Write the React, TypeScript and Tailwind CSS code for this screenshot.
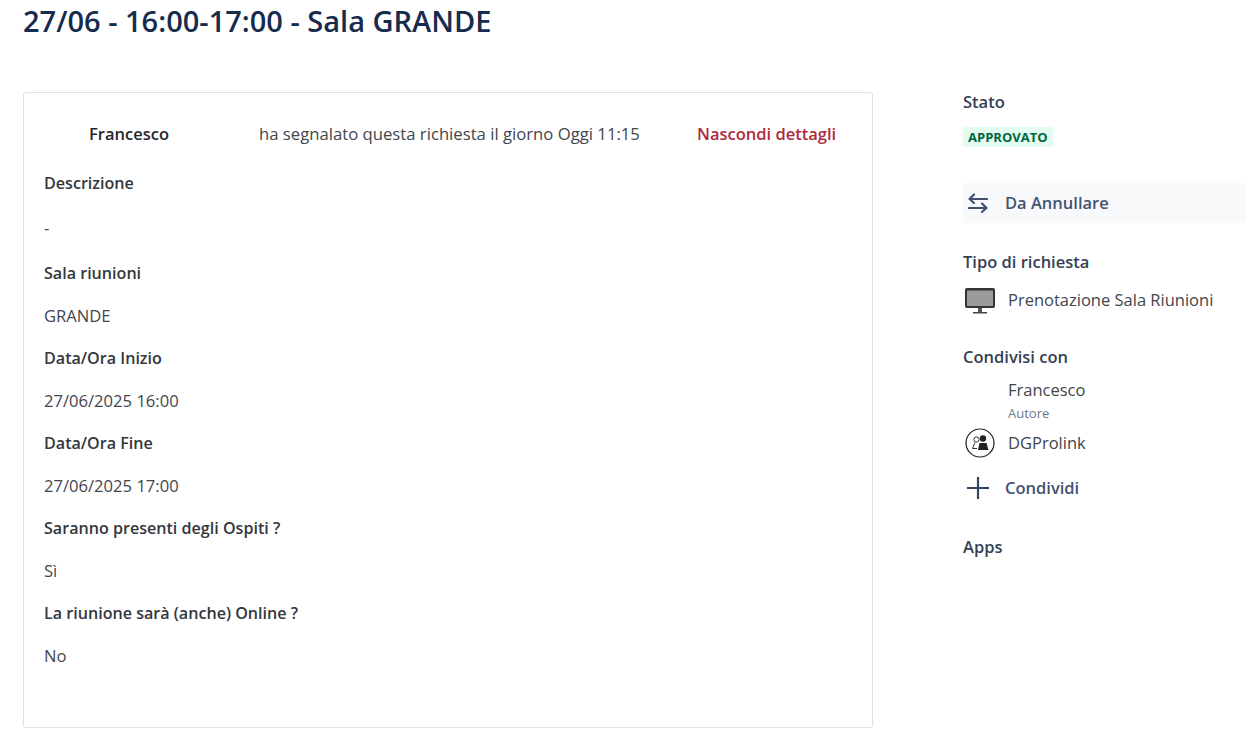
import React from "react";

const fields = [
  { label: "Descrizione", value: "-" },
  { label: "Sala riunioni", value: "GRANDE" },
  { label: "Data/Ora Inizio", value: "27/06/2025 16:00" },
  { label: "Data/Ora Fine", value: "27/06/2025 17:00" },
  { label: "Saranno presenti degli Ospiti ?", value: "Sì" },
  { label: "La riunione sarà (anche) Online ?", value: "No" },
];

const MonitorIcon = () => (
  <svg width="32" height="27" viewBox="0 0 32 27" className="shrink-0">
    <rect x="1" y="1" width="30" height="20" rx="2" fill="#333" />
    <rect x="3" y="3.5" width="26" height="15.5" fill="#9b9b9b" />
    <rect x="14" y="21" width="4" height="4" fill="#555" />
    <rect x="9" y="25" width="14" height="1.5" fill="#444" />
  </svg>
);

const GroupIcon = () => (
  <svg width="30" height="30" viewBox="0 0 30 30" className="shrink-0">
    <circle cx="15" cy="15" r="14" fill="#fff" stroke="#222" strokeWidth="1.2" />
    <circle cx="11.5" cy="11.5" r="2.6" fill="none" stroke="#333" strokeWidth="1" />
    <path d="M10 14.5 L7.5 20.5 H12" fill="none" stroke="#333" strokeWidth="1" />
    <circle cx="18" cy="10.5" r="3.2" fill="#222" />
    <path d="M13 22 L14.5 15 H21.5 L23.5 22 Z" fill="#222" />
  </svg>
);

export default function App() {
  return (
    <div className="flex min-h-[743px] bg-white pl-[23px] font-['Open_Sans','Noto_Sans',sans-serif] text-[#172b4d]">
      {/* main column */}
      <div className="w-[850px] shrink-0">
        <h1 className="h-[92px] pt-[1px] text-[29px] leading-[40px] font-semibold text-[#172b4d]">
          27/06 - 16:00-17:00 - Sala GRANDE
        </h1>
        <div className="h-[636px] rounded-[3px] border border-[#dfe1e6] pl-5 pt-[27px]">
          <div className="flex h-[28px] items-center text-[16.5px]">
            <span className="w-[215px] pl-[45px] font-semibold text-[#24262a]">Francesco</span>
            <span className="w-[438px] text-[16.7px] text-[#42464d]">ha segnalato questa richiesta il giorno Oggi 11:15</span>
            <span className="font-semibold text-[#ae2a3b]">Nascondi dettagli</span>
          </div>
          <div className="mt-[24px] flex flex-col">
            {fields.map((f, i) => (
              <div key={f.label} className={i === 0 ? "h-[90px]" : "h-[85px]"}>
                <div className="text-[16.1px] leading-[22px] font-semibold text-[#33373d]">{f.label}</div>
                <div className={i === 0 ? "mt-[23px] text-[16.6px] leading-[22px] text-[#42464d]" : "mt-[21px] text-[16.6px] leading-[22px] text-[#42464d]"}>
                  {f.value}
                </div>
              </div>
            ))}
          </div>
        </div>
      </div>

      {/* sidebar */}
      <div className="ml-[90px] flex-1 pt-[90px]">
        <div className="text-[16.5px] leading-[24px] font-semibold text-[#344054]">Stato</div>
        <div className="mt-[13px] w-fit rounded-[2px] bg-[#e3fcef] px-[5px] text-[13px] leading-[20px] font-bold text-[#006644]">
          APPROVATO
        </div>
        <div className="mt-[36px] flex h-[40px] items-center gap-[17px] rounded-[3px] bg-[#f8f9fb] pl-[5px] text-[16.5px] font-semibold text-[#42526e]">
          <svg width="20" height="20" viewBox="0 0 20 20" fill="none" stroke="#42526e" strokeWidth="2.2" strokeLinecap="round" strokeLinejoin="round">
            <path d="M19 6H2M6 1.5 1.5 6 6 10" />
            <path d="M1 15h17M14 10.5l4.5 4.5-4.5 4" />
          </svg>
          Da Annullare
        </div>
        <div className="mt-[27px] text-[16.5px] leading-[24px] font-semibold text-[#344054]">Tipo di richiesta</div>
        <div className="mt-[11px] flex h-[30px] items-center gap-[12px] pl-[1px] text-[16.5px] text-[#42464d]">
          <MonitorIcon />
          Prenotazione Sala Riunioni
        </div>
        <div className="mt-[30px] text-[16.5px] leading-[24px] font-semibold text-[#344054]">Condivisi con</div>
        <div className="mt-[10px] pl-[45px] text-[16.5px] leading-[22px] text-[#42464d]">Francesco</div>
        <div className="mt-[4px] pl-[45px] text-[13px] leading-[16px] text-[#6b778c]">Autore</div>
        <div className="mt-[6px] flex h-[32px] items-center gap-[13px] pl-[2px] text-[16.5px] text-[#42464d]">
          <GroupIcon />
          DGProlink
        </div>
        <div className="mt-[14px] flex h-[30px] items-center gap-[16px] pl-[4px] text-[16.5px] font-semibold text-[#42526e]">
          <svg width="22" height="22" viewBox="0 0 22 22" fill="none" stroke="#344563" strokeWidth="2.2">
            <path d="M11 0v22M0 11h22" />
          </svg>
          Condividi
        </div>
        <div className="mt-[32px] text-[16.5px] leading-[24px] font-semibold text-[#344054]">Apps</div>
      </div>
    </div>
  );
}
